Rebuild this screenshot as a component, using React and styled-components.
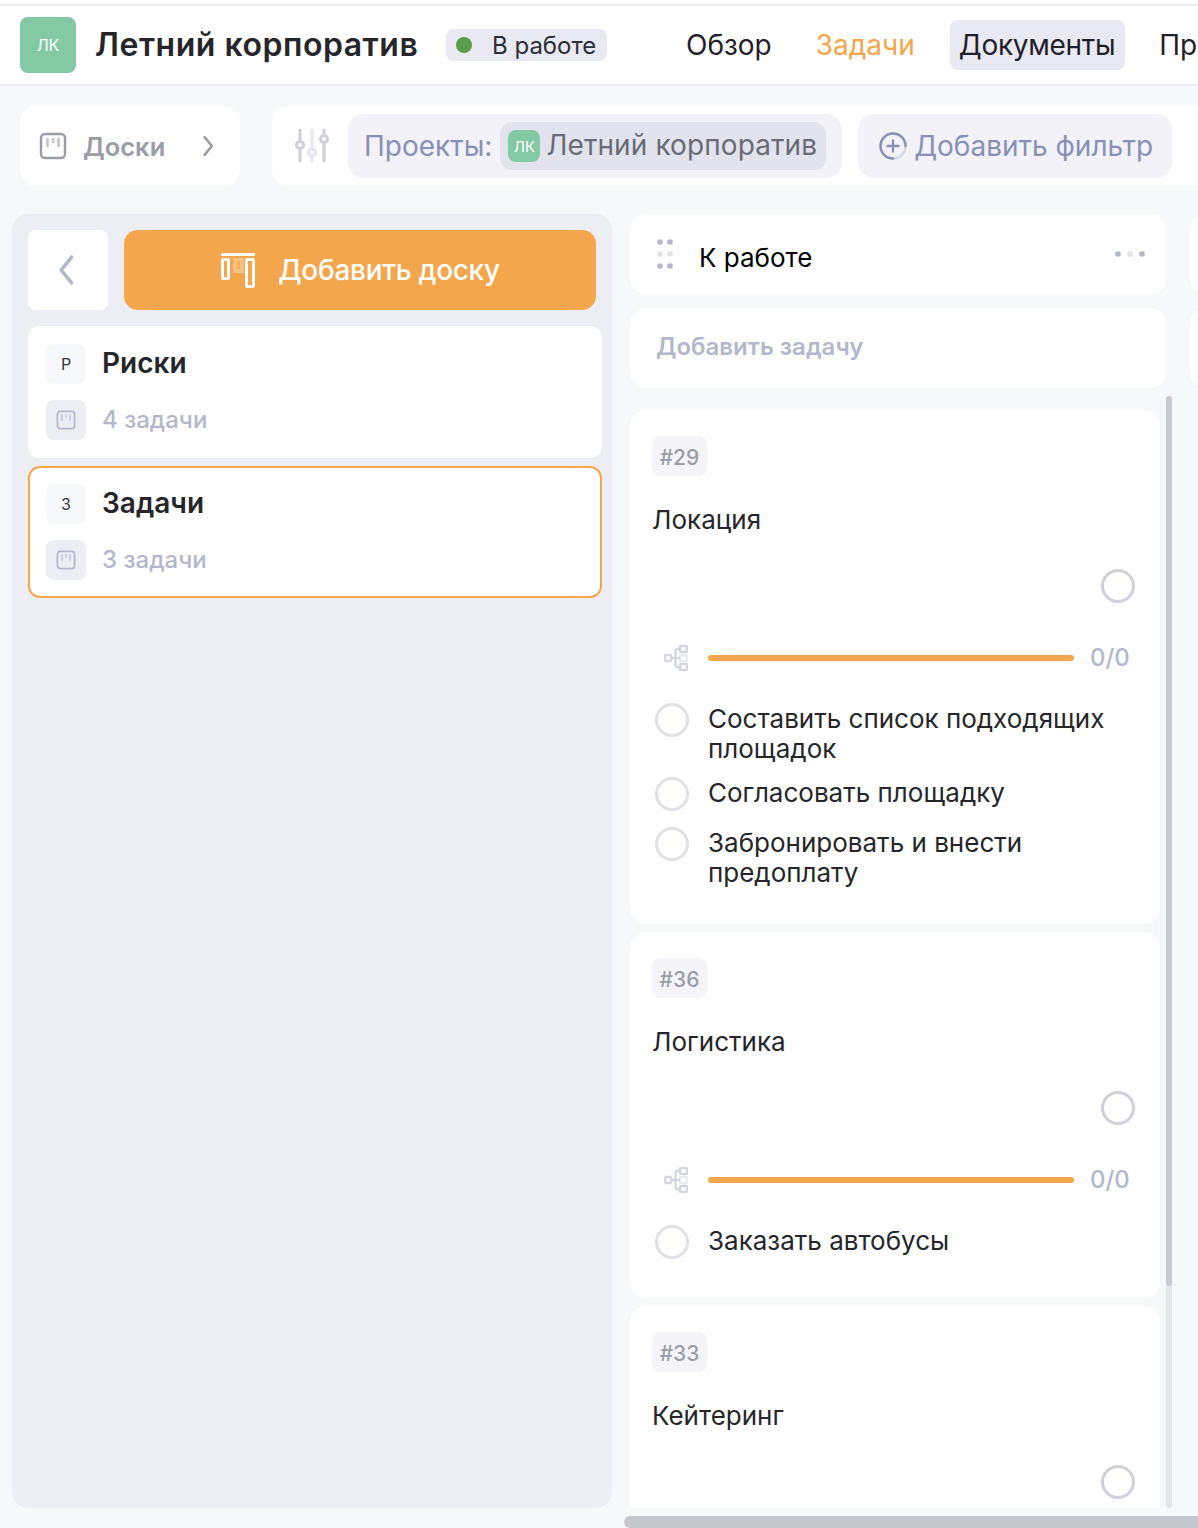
import React from "react";
import styled, { createGlobalStyle } from "styled-components";

const GlobalStyle = createGlobalStyle`
  html, body {
    margin: 0;
    padding: 0;
    background: #f7f8fa;
  }
  body {
    font-family: Inter, "Noto Sans", "Liberation Sans", sans-serif;
    color: #26262a;
  }
`;

const Page = styled.div`
  position: relative;
  width: 1198px;
  height: 1528px;
  overflow: hidden;
  padding-top: 4px;
  box-sizing: border-box;
  background: linear-gradient(#fff 4px, #f7f8fa 4px);
`;

const Header = styled.header`
  display: flex;
  align-items: center;
  height: 78px;
  padding-left: 20px;
  background: #fff;
  border-top: 2px solid #ecedf3;
  border-bottom: 2px solid #ecedf3;
  white-space: nowrap;
`;

const Logo = styled.div`
  display: flex;
  align-items: center;
  justify-content: center;
  flex: none;
  width: ${(p) => p.size}px;
  height: ${(p) => p.size}px;
  border-radius: 8px;
  background: #82c9a4;
  color: #fff;
  font-size: ${(p) => (p.size > 40 ? 16 : 15)}px;
`;

const Title = styled.h1`
  flex: none;
  width: 320px;
  margin: 0 0 0 19px;
  font-size: 32px;
  font-weight: 600;
  letter-spacing: 0.52px;
  line-height: 36px;
  color: #26262a;
`;

const Status = styled.div`
  display: flex;
  align-items: center;
  flex: none;
  width: 161px;
  height: 32px;
  box-sizing: border-box;
  margin-left: 31px;
  padding-left: 10px;
  border-radius: 8px;
  background: #e8e9f2;
  font-size: 24px;
  color: #2c2d36;
`;

const StatusDot = styled.span`
  width: 16px;
  height: 16px;
  margin-right: 20px;
  border-radius: 50%;
  background: #5a9e4b;
`;

const Nav = styled.nav`
  display: flex;
  align-items: center;
  margin-left: 69px;
`;

const NavItem = styled.div`
  display: flex;
  align-items: center;
  height: 50px;
  padding: 0 10px 0 ${(p) => (p.hovered ? 9 : 10)}px;
  margin-right: ${(p) => p.gap}px;
  border-radius: 8px;
  background: ${(p) => (p.hovered ? "#e8e9f2" : "transparent")};
  color: ${(p) => (p.active ? "#f3a64c" : "#1f2029")};
  font-size: 28px;
  letter-spacing: ${(p) => (p.hovered ? "-0.3px" : "0")};
`;

const FilterRow = styled.div`
  display: flex;
  gap: 32px;
  padding: 20px 0 0 20px;
  white-space: nowrap;
`;

const BoardsToggle = styled.div`
  display: flex;
  align-items: center;
  flex: none;
  width: 220px;
  height: 80px;
  box-sizing: border-box;
  padding-left: 19px;
  border-radius: 16px;
  background: #fff;
  color: #9a9ca6;
  font-size: 25.5px;
  font-weight: 600;
`;

const BoardsLabel = styled.span`
  width: 82px;
  margin: 0 38px 0 16px;
`;

const FilterBar = styled.div`
  display: flex;
  align-items: center;
  flex: none;
  width: 960px;
  height: 80px;
  box-sizing: border-box;
  padding-left: 22px;
  border-radius: 16px 0 0 16px;
  background: #fff;
`;

const FilterPill = styled.div`
  display: flex;
  align-items: center;
  height: 64px;
  box-sizing: border-box;
  margin-left: ${(p) => p.offset}px;
  padding: 0 ${(p) => p.right}px 0 ${(p) => p.left}px;
  border-radius: 16px;
  background: #f2f2f8;
  color: #8890b5;
  font-size: 28px;
`;

const ProjectChip = styled.div`
  display: flex;
  align-items: center;
  gap: 6px;
  height: 48px;
  margin-left: 8px;
  padding: 0 9px 0 8px;
  border-radius: 12px;
  background: #e2e3ec;
  color: #6a6b76;
`;

const ChipLabel = styled.span`
  padding-bottom: 2px;
  letter-spacing: 0.1px;
`;

const Main = styled.main`
  display: flex;
  gap: 18px;
  padding: 28px 0 0 12px;
`;

const Panel = styled.aside`
  flex: none;
  width: 600px;
  height: 1294px;
  box-sizing: border-box;
  padding: 16px 10px 0 16px;
  border-radius: 16px;
  background: #edeef3;
`;

const PanelTop = styled.div`
  display: flex;
  gap: 16px;
  margin-bottom: 16px;
`;

const BackButton = styled.button`
  display: flex;
  align-items: center;
  justify-content: center;
  flex: none;
  width: 80px;
  height: 80px;
  padding: 0 4px 0 0;
  border: 0;
  border-radius: 8px;
  background: #fff;
`;

const AddBoardButton = styled.button`
  display: flex;
  align-items: center;
  justify-content: center;
  gap: 23px;
  width: 472px;
  height: 80px;
  padding: 0 0 0 1px;
  border: 0;
  border-radius: 14px;
  background: #f3a64c;
  color: #fff;
  font-family: inherit;
  font-size: 28px;
  font-weight: 500;
  letter-spacing: -0.3px;
`;

const BoardList = styled.div`
  display: flex;
  flex-direction: column;
  gap: 8px;
`;

const BoardCard = styled.div`
  display: flex;
  flex-direction: column;
  gap: 16px;
  height: 132px;
  box-sizing: border-box;
  padding: 16px;
  border: 2px solid ${(p) => (p.selected ? "#f3a64c" : "#fff")};
  border-radius: 12px;
  background: #fff;
`;

const BoardRow = styled.div`
  display: flex;
  align-items: center;
  gap: 16px;
`;

const BoardBadge = styled.div`
  display: flex;
  align-items: center;
  justify-content: center;
  flex: none;
  width: 40px;
  height: 40px;
  border-radius: 8px;
  background: ${(p) => (p.tinted ? "#eceef4" : "#f7f8fa")};
  font-size: 16px;
  color: #35363d;
`;

const BoardName = styled.div`
  padding-bottom: 2px;
  font-size: 28px;
  font-weight: 600;
  color: #26262a;
`;

const BoardCount = styled.div`
  padding-bottom: 2px;
  font-size: 24px;
  font-weight: 500;
  color: #b4b7c9;
`;

const Column = styled.section`
  flex: none;
  width: 536px;

  & + & {
    margin-left: 6px;
  }
`;

const ColumnHead = styled.div`
  display: flex;
  align-items: center;
  height: 80px;
  box-sizing: border-box;
  margin-bottom: 14px;
  padding: 0 20px 0 26px;
  border-radius: 16px;
  background: #fff;
  color: #000;
  font-size: 26px;
  font-weight: 400;
`;

const ColumnName = styled.span`
  flex: 1;
  margin-left: 25px;
  margin-top: 6px;
`;

const AddTask = styled.div`
  display: flex;
  align-items: center;
  height: 80px;
  box-sizing: border-box;
  padding: 0 0 4px 26px;
  border-radius: 16px;
  background: #fff;
  color: #b4b7c9;
  font-size: 24px;
  font-weight: 600;
`;

const TaskList = styled.div`
  display: flex;
  flex-direction: column;
  gap: 8px;
  width: 530px;
  height: 1098px;
  margin-top: 22px;
  overflow: hidden;
`;

const TaskCard = styled.article`
  flex: none;
  box-sizing: border-box;
  padding: 26px 22px 36px;
  border-radius: 16px;
  background: #fff;
`;

const TaskTag = styled.div`
  display: flex;
  align-items: center;
  justify-content: center;
  width: 55px;
  height: 40px;
  box-sizing: border-box;
  padding-top: 2px;
  border-radius: 8px;
  background: #f5f5f9;
  color: #9a9ca6;
  font-size: 21px;
  font-weight: 500;
`;

const TaskTitle = styled.div`
  margin-top: 29px;
  font-size: 26px;
  line-height: 30px;
  color: #26262a;
`;

const Circle = styled.span`
  display: block;
  flex: none;
  width: 34px;
  height: 34px;
  box-sizing: border-box;
  border: 3px solid ${(p) => (p.light ? "#e0e1e6" : "#cfd0d8")};
  border-radius: 50%;
`;

const StatusRow = styled.div`
  display: flex;
  justify-content: flex-end;
  margin: 34px 3px 0 0;
`;

const ProgressRow = styled.div`
  display: flex;
  align-items: center;
  height: 30px;
  margin-top: 39px;
  padding-left: 12px;
`;

const ProgressBar = styled.div`
  width: 366px;
  height: 6px;
  margin: 2px 0 0 20px;
  border-radius: 3px;
  background: #f3a64c;
`;

const ProgressCount = styled.span`
  margin-left: 16px;
  font-size: 24px;
  font-weight: 500;
  color: #b4b7c9;
`;

const Subtasks = styled.div`
  display: flex;
  flex-direction: column;
  gap: 14px;
  margin-top: 32px;
`;

const Subtask = styled.div`
  display: flex;
  gap: 19px;
  min-height: 36px;
  padding-left: 3px;
  font-size: 26px;
  line-height: 30px;
  color: #26262a;
`;

const SubtaskCircle = styled(Circle)`
  margin-top: -1px;
`;

const ScrollTrack = styled.div`
  position: absolute;
  left: 1166px;
  top: 396px;
  width: 6px;
  height: 1112px;
  border-radius: 3px;
  background: #e4e5ea;
`;

const ScrollThumb = styled.div`
  height: 890px;
  border-radius: 3px;
  background: #c9cad3;
`;

const BottomScroll = styled.div`
  position: absolute;
  left: 624px;
  right: 0;
  bottom: 0;
  height: 12px;
  border-radius: 6px 0 0 6px;
  background: #c6c7ce;
`;

const BoardIcon = ({ color = "#9a9ca6", size = 28 }) => (
  <svg width={size} height={size} viewBox="0 0 28 28" fill="none">
    <rect x="2" y="2" width="24" height="24" rx="4" stroke={color} strokeWidth="2.4" />
    <path d="M8.500 6v9M14 6v5M19.500 6v9" stroke={color} strokeOpacity="0.6" strokeWidth="2.600" />
  </svg>
);

const Chevron = ({ left, color, size, width = 2.4 }) => (
  <svg width={size} height={size * 2} viewBox="0 0 10 20" fill="none">
    <path
      d={left ? "M8.5 2 2 10l6.500 8" : "M1.500 2 8 10l-6.500 8"}
      stroke={color}
      strokeWidth={width}
      strokeLinecap="round"
      strokeLinejoin="round"
    />
  </svg>
);

const SlidersIcon = () => (
  <svg width="36" height="36" viewBox="0 0 36 36" fill="none" stroke="#cfd0d8" strokeWidth="3" strokeLinecap="round" style={{ flex: "none" }}>
    <path d="M6 2v11M6 21v12" />
    <circle cx="6" cy="17" r="3.500" />
    <path d="M18 2v19M18 28v5" stroke="#e6e7ec" />
    <circle cx="18" cy="24.500" r="3.500" stroke="#e6e7ec" />
    <path d="M30 2v5M30 15v18" />
    <circle cx="30" cy="11" r="3.500" />
  </svg>
);

const PlusCircleIcon = () => (
  <svg width="30" height="30" viewBox="0 0 30 30" fill="none" strokeWidth="2.4" strokeLinecap="round" style={{ marginRight: 6 }}>
    <circle cx="15" cy="15" r="12.500" stroke="#d4d7e6" />
    <path d="M27.500 15A12.500 12.500 0 1 0 15 27.500" stroke="#8890b5" />
    <path d="M15 9.500v11M9.500 15h11" stroke="#8890b5" />
  </svg>
);

const AddBoardIcon = () => (
  <svg width="34" height="35" viewBox="0 0 34 35" fill="none">
    <path d="M0 1.500h34" stroke="#fff" strokeWidth="3" />
    <rect x="12" y="5" width="11" height="15" fill="#fff" fillOpacity="0.3" />
    <rect x="16" y="8" width="3" height="8" fill="#f3a64c" fillOpacity="0.7" />
    <rect x="1.500" y="6.500" width="6" height="19" rx="1" stroke="#fff" strokeWidth="3" />
    <rect x="25.500" y="6.500" width="7" height="27" rx="1" stroke="#fff" strokeWidth="3" />
  </svg>
);

const TreeIcon = () => (
  <svg width="24" height="28" viewBox="0 0 24 28" fill="none" stroke="#d6d7de" strokeWidth="2.400" style={{ flex: "none", marginTop: 2 }}>
    <rect x="1.200" y="11" width="6" height="6" rx="1" />
    <rect x="16" y="2" width="7" height="6" rx="1" />
    <rect x="16" y="11" width="7" height="6" rx="1" stroke="#ebecf0" />
    <rect x="16" y="20" width="7" height="6" rx="1" />
    <path d="M7 14h9M11.500 5v18M11.500 5H16M11.500 23H16" />
  </svg>
);

const DotsGrip = () => (
  <svg width="18" height="32" viewBox="0 0 18 32" style={{ flex: "none" }}>
    {[4, 16, 28].map((y) =>
      [4, 14].map((x) => (
        <circle key={`${x}-${y}`} cx={x} cy={y} r="2.800" fill={y === 16 ? "#e2e3ea" : "#b4b7c9"} />
      ))
    )}
  </svg>
);

const DotsMenu = () => (
  <svg width="30" height="6" viewBox="0 0 30 6" style={{ marginRight: 1 }}>
    <circle cx="3" cy="3" r="2.800" fill="#b4b7c9" />
    <circle cx="15" cy="3" r="2.800" fill="#e2e3ea" />
    <circle cx="27" cy="3" r="2.800" fill="#b4b7c9" />
  </svg>
);

const boards = [
  { letter: "Р", name: "Риски", count: "4 задачи" },
  { letter: "З", name: "Задачи", count: "3 задачи", selected: true },
];

const tasks = [
  {
    id: "#29",
    title: "Локация",
    subtasks: [
      "Составить список подходящих площадок",
      "Согласовать площадку",
      "Забронировать и внести предоплату",
    ],
  },
  { id: "#36", title: "Логистика", subtasks: ["Заказать автобусы"] },
  { id: "#33", title: "Кейтеринг", subtasks: [] },
];

const App = () => (
  <Page>
    <GlobalStyle />
    <Header>
      <Logo size={56}>ЛК</Logo>
      <Title>Летний корпоратив</Title>
      <Status>
        <StatusDot />В работе
      </Status>
      <Nav>
        <NavItem gap={24}>Обзор</NavItem>
        <NavItem gap={25} active>
          Задачи
        </NavItem>
        <NavItem gap={24} hovered>
          Документы
        </NavItem>
        <NavItem gap={0}>Проекты</NavItem>
      </Nav>
    </Header>

    <FilterRow>
      <BoardsToggle>
        <BoardIcon />
        <BoardsLabel>Доски</BoardsLabel>
        <Chevron color="#9a9ca6" size={11} />
      </BoardsToggle>
      <FilterBar>
        <SlidersIcon />
        <FilterPill offset={18} left={16} right={16}>
          Проекты:
          <ProjectChip>
            <Logo size={32}>ЛК</Logo>
            <ChipLabel>Летний корпоратив</ChipLabel>
          </ProjectChip>
        </FilterPill>
        <FilterPill offset={16} left={20} right={19}>
          <PlusCircleIcon />
          Добавить фильтр
        </FilterPill>
      </FilterBar>
    </FilterRow>

    <Main>
      <Panel>
        <PanelTop>
          <BackButton>
            <Chevron left color="#b4b7c9" size={16} width={2.2} />
          </BackButton>
          <AddBoardButton>
            <AddBoardIcon />
            Добавить доску
          </AddBoardButton>
        </PanelTop>
        <BoardList>
          {boards.map((board) => (
            <BoardCard key={board.name} selected={board.selected}>
              <BoardRow>
                <BoardBadge>{board.letter}</BoardBadge>
                <BoardName>{board.name}</BoardName>
              </BoardRow>
              <BoardRow>
                <BoardBadge tinted>
                  <BoardIcon color="#b4b7c9" size={20} />
                </BoardBadge>
                <BoardCount>{board.count}</BoardCount>
              </BoardRow>
            </BoardCard>
          ))}
        </BoardList>
      </Panel>

      <Column>
        <ColumnHead>
          <DotsGrip />
          <ColumnName>К работе</ColumnName>
          <DotsMenu />
        </ColumnHead>
        <AddTask>Добавить задачу</AddTask>
        <TaskList>
          {tasks.map((task) => (
            <TaskCard key={task.id}>
              <TaskTag>{task.id}</TaskTag>
              <TaskTitle>{task.title}</TaskTitle>
              <StatusRow>
                <Circle />
              </StatusRow>
              <ProgressRow>
                <TreeIcon />
                <ProgressBar />
                <ProgressCount>0/0</ProgressCount>
              </ProgressRow>
              <Subtasks>
                {task.subtasks.map((text) => (
                  <Subtask key={text}>
                    <SubtaskCircle light />
                    <span>{text}</span>
                  </Subtask>
                ))}
              </Subtasks>
            </TaskCard>
          ))}
        </TaskList>
      </Column>

      <Column>
        <ColumnHead />
        <AddTask />
      </Column>
    </Main>

    <ScrollTrack>
      <ScrollThumb />
    </ScrollTrack>
    <BottomScroll />
  </Page>
);

export default App;
